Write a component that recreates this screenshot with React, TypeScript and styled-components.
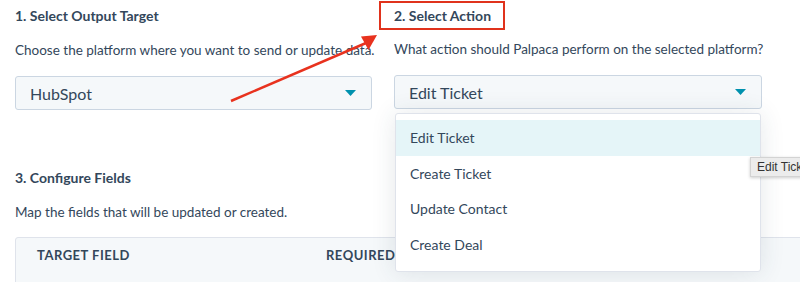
import React from 'react';
import styled, { createGlobalStyle } from 'styled-components';

const GlobalStyle = createGlobalStyle`
    html, body {
        margin: 0;
        padding: 0;
        background: #ffffff;
        overflow: hidden;
    }
    body {
        font-family: 'Lato', 'Liberation Sans', sans-serif;
        color: #33475b;
    }
`;

const actions = ['Edit Ticket', 'Create Ticket', 'Update Contact', 'Create Deal'];

function Caret() {
    return (
        <svg width="11" height="6" viewBox="0 0 11 6">
            <path d="M0 0 L11 0 L5.5 6 Z" fill="#0091ae" />
        </svg>
    );
}

export default function App() {
    return (
        <Page>
            <GlobalStyle />
            <Columns>
                <Column>
                    <Heading>1. Select Output Target</Heading>
                    <Help>Choose the platform where you want to send or update data.</Help>
                    <Select>
                        <span>HubSpot</span>
                        <Caret />
                    </Select>
                </Column>
                <Column>
                    <Heading $boxed>2. Select Action</Heading>
                    <Help>What action should Palpaca perform on the selected platform?</Help>
                    <SelectWrap>
                        <Select>
                            <span>Edit Ticket</span>
                            <Caret />
                        </Select>
                        <Menu>
                            {actions.map((a, i) => (
                                <MenuItem key={a} $active={i === 0}>
                                    {a}
                                </MenuItem>
                            ))}
                        </Menu>
                        <Tooltip>Edit Ticket</Tooltip>
                    </SelectWrap>
                </Column>
            </Columns>

            <Section>
                <Heading>3. Configure Fields</Heading>
                <Help>Map the fields that will be updated or created.</Help>
                <Table>
                    <HeadCell $width={289}>Target field</HeadCell>
                    <HeadCell>Required</HeadCell>
                </Table>
            </Section>

            {/* annotation arrow pointing at step 2 */}
            <Arrow width="800" height="282" viewBox="0 0 800 282">
                <line x1="231" y1="101" x2="366" y2="43" stroke="#e8321e" strokeWidth="2.5" />
                <path d="M377 35 L361 36.5 L368.5 50 Z" fill="#e8321e" />
            </Arrow>
        </Page>
    );
}

const Page = styled.div`
    position: relative;
    width: 800px;
    height: 282px;
    padding: 0 0 0 15px;
    box-sizing: border-box;
    overflow: hidden;
`;
const Columns = styled.div`
    display: grid;
    grid-template-columns: 357px 368px;
    column-gap: 22px;
`;
const Column = styled.div`
    display: flex;
    flex-direction: column;
    align-items: flex-start;
`;
const Heading = styled.div<{ $boxed?: boolean }>`
    font-size: 14px;
    font-weight: 700;
    line-height: 18px;
    color: #33475b;
    padding: 7px 0 6px;
    white-space: nowrap;
    ${(p) =>
        p.$boxed &&
        `
        margin: 1px 0 0 -15px;
        padding: 4px 12px 3px 13px;
        border: 2px solid #e0321c;
    `}
`;
const Help = styled.div`
    font-size: 13.5px;
    line-height: 20px;
    color: #33475b;
    margin-top: 9px;
    white-space: nowrap;
`;
const SelectWrap = styled.div`
    position: relative;
    width: 100%;
`;
const Select = styled.div`
    margin-top: 16px;
    width: 100%;
    height: 34px;
    box-sizing: border-box;
    display: flex;
    align-items: center;
    justify-content: space-between;
    padding: 0 15px 0 14px;
    background: #f5f8fa;
    border: 1px solid #cbd6e2;
    border-radius: 3px;
    font-size: 16px;
    color: #33475b;
`;
const Menu = styled.div`
    position: absolute;
    top: 54px;
    left: 1px;
    right: 1px;
    background: #ffffff;
    border: 1px solid #dfe3eb;
    border-radius: 3px;
    box-shadow: 0 1px 24px rgba(45, 62, 80, 0.12);
    padding: 6px 0 9px;
    z-index: 2;
`;
const MenuItem = styled.div<{ $active?: boolean }>`
    height: 35.5px;
    display: flex;
    align-items: center;
    padding-left: 14px;
    font-size: 14px;
    color: #33475b;
    background: ${(p) => (p.$active ? '#e5f5f8' : 'transparent')};
`;
const Tooltip = styled.div`
    position: absolute;
    top: 98px;
    left: 356px;
    white-space: nowrap;
    padding: 2px 6px;
    font-family: 'Liberation Sans', sans-serif;
    font-size: 12px;
    color: #333333;
    background: #ececec;
    border: 1px solid #d3d3d3;
    box-shadow: 0 1px 3px rgba(0, 0, 0, 0.2);
    z-index: 3;
`;
const Section = styled.div`
    margin-top: 52px;
    display: flex;
    flex-direction: column;
`;
const Table = styled.div`
    margin-top: 15px;
    width: 800px;
    height: 60px;
    box-sizing: border-box;
    display: flex;
    align-items: flex-start;
    padding: 9px 0 0 21px;
    background: #f5f8fa;
    border: 1px solid #dfe3eb;
    border-radius: 3px 0 0 0;
`;
const HeadCell = styled.div<{ $width?: number }>`
    width: ${(p) => (p.$width ? `${p.$width}px` : 'auto')};
    font-size: 13px;
    font-weight: 700;
    text-transform: uppercase;
    letter-spacing: 0.5px;
    color: #33475b;
`;
const Arrow = styled.svg`
    position: absolute;
    left: 0;
    top: 0;
    pointer-events: none;
    z-index: 4;
`;
